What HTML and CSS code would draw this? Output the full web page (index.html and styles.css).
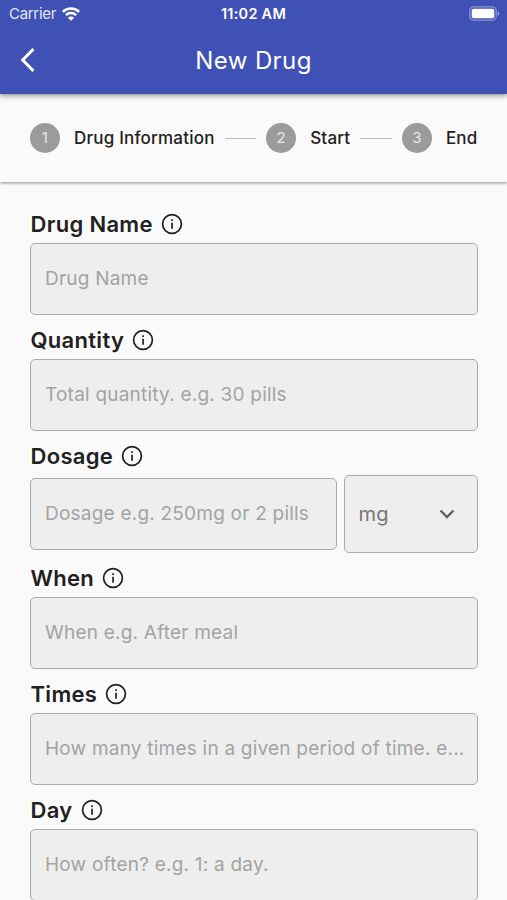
FILE: index.html
```html
<!DOCTYPE html>
<html lang="en">
<head>
<meta charset="utf-8">
<meta name="viewport" content="width=device-width, initial-scale=1">
<title>New Drug</title>
<link rel="stylesheet" href="styles.css">
</head>

<body>
<svg class="sprite" width="0" height="0">
  <symbol id="info" viewBox="0 0 24 24">
    <circle cx="12" cy="12" r="9.400" fill="none" stroke="#212121" stroke-width="1.700"/>
    <path d="M11.200 7.200h1.700v1.800h-1.700zM11.200 10.800h1.700v6h-1.700z" fill="#212121"/>
  </symbol>
</svg>

<header class="app-header">
  <div class="status-bar">
    <div class="carrier">
      <span>Carrier</span>
      <svg class="wifi" width="18" height="14" viewBox="0 0 18 14" fill="none" stroke="#fff" stroke-width="2.500">
        <path d="M.9 4.900C5.300.4 12.700.4 17.100 4.900"/>
        <path d="M3.900 8.200C6.700 5.400 11.300 5.400 14.100 8.200"/>
        <path d="M9 13.800L5.900 10.700C7.600 9.100 10.400 9.100 12.100 10.700z" fill="#fff" stroke="none"/>
      </svg>
    </div>
    <div class="clock">11:02 AM</div>
    <svg class="battery" width="31" height="15" viewBox="0 0 31 15">
      <rect x=".8" y=".8" width="26.400" height="13.400" rx="4" fill="none" stroke="#fff" stroke-opacity=".4" stroke-width="1.300"/>
      <rect x="2.700" y="2.700" width="22.600" height="9.600" rx="2" fill="#fff"/>
      <path d="M28.700 5.200c2 .9 2 3.700 0 4.600z" fill="#fff" fill-opacity=".5"/>
    </svg>
  </div>
  <div class="nav-bar">
    <svg class="back" width="16" height="26" viewBox="0 0 16 26" fill="none" stroke="#fff" stroke-width="3">
      <path d="M13.500 2L2.700 13l10.800 11"/>
    </svg>
    <h1>New Drug</h1>
  </div>
</header>

<div class="stepper">
  <div class="step"><span class="number">1</span>Drug Information</div>
  <div class="line"></div>
  <div class="step"><span class="number">2</span>Start</div>
  <div class="line"></div>
  <div class="step"><span class="number">3</span>End</div>
</div>

<form class="drug-form">
  <div class="field">
    <label for="name">Drug Name <svg class="info"><use href="#info"/></svg></label>
    <input id="name" type="text" placeholder="Drug Name">
  </div>

  <div class="field">
    <label for="quantity">Quantity <svg class="info"><use href="#info"/></svg></label>
    <input id="quantity" type="text" placeholder="Total quantity. e.g. 30 pills">
  </div>

  <div class="field">
    <label for="dosage">Dosage <svg class="info"><use href="#info"/></svg></label>
    <div class="dosage">
      <input id="dosage" type="text" placeholder="Dosage e.g. 250mg or 2 pills">
      <button class="unit" type="button">
        mg
        <svg width="16" height="10" viewBox="0 0 16 10" fill="none" stroke="#616161" stroke-width="2.400">
          <path d="M1.500 1.500L8 8l6.500-6.500"/>
        </svg>
      </button>
    </div>
  </div>

  <div class="field">
    <label for="when">When <svg class="info"><use href="#info"/></svg></label>
    <input id="when" type="text" placeholder="When e.g. After meal">
  </div>

  <div class="field">
    <label for="times">Times <svg class="info"><use href="#info"/></svg></label>
    <input id="times" type="text" placeholder="How many times in a given period of time. e...">
  </div>

  <div class="field">
    <label for="day">Day <svg class="info"><use href="#info"/></svg></label>
    <input id="day" type="text" placeholder="How often? e.g. 1: a day.">
  </div>
</form>
</body>
</html>
```

FILE: styles.css
```css
* {
  box-sizing: border-box;
}

body {
  margin: 0;
  height: 900px;
  overflow: hidden;
  background: #fafafa;
  color: #212121;
  font-family: Inter, "Liberation Sans", sans-serif;
}

.sprite {
  display: block;
}

/* header */
.app-header {
  position: relative;
  height: 94px;
  background: #3f51b5;
  color: #fff;
  box-shadow: 0 2px 5px rgba(0, 0, 0, .4);
}

.status-bar {
  display: grid;
  grid-template-columns: 1fr auto 1fr;
  align-items: center;
  height: 27px;
  padding: 0 7px 0 9px;
  font-size: 15px;
}

.carrier {
  display: flex;
  align-items: center;
  gap: 6px;
  color: #e3e6f5;
  letter-spacing: -.3px;
}

.clock {
  margin-right: 2px;
  font-weight: 600;
  font-size: 14.5px;
  letter-spacing: .25px;
}

.battery {
  justify-self: end;
}

.nav-bar {
  display: grid;
  grid-template-columns: 60px 1fr 60px;
  align-items: center;
  height: 66px;
}

.back {
  margin-left: 20px;
}

h1 {
  margin: 0;
  font-size: 24px;
  font-weight: 400;
  letter-spacing: .4px;
  text-align: center;
}

/* stepper */
.stepper {
  display: flex;
  align-items: center;
  height: 88px;
  padding: 0 29.5px 0 30px;
  box-shadow: 0 1px 3px rgba(0, 0, 0, .45);
}

.step {
  display: flex;
  align-items: center;
  gap: 14px;
  font-size: 17px;
  font-weight: 500;
  letter-spacing: .2px;
  white-space: nowrap;
}

.number {
  width: 30px;
  height: 30px;
  border-radius: 50%;
  background: #9b9b9b;
  color: #e8e8e8;
  font-size: 15px;
  font-weight: 400;
  line-height: 30px;
  text-align: center;
}

.line {
  flex: 1;
  height: 1px;
  margin: 0 10px;
  background: #bdbdbd;
}

/* form */
.drug-form {
  padding: 17px 29.5px 0 30px;
}

label {
  display: flex;
  align-items: center;
  gap: 7px;
  height: 44px;
  padding: 6px 0 0 .5px;
  font-size: 22px;
  font-weight: 600;
  letter-spacing: .3px;
}

.info {
  width: 24px;
  height: 24px;
}

input,
.unit {
  display: block;
  width: 100%;
  height: 72px;
  padding: 0 8px 2px 14px;
  border: 1px solid #aaa;
  border-radius: 5px;
  background: #eee;
  font-family: inherit;
  font-size: 19px;
  letter-spacing: .22px;
}

input::placeholder {
  color: #a3a3a3;
}

input {
  text-overflow: ellipsis;
}

.dosage {
  display: grid;
  grid-template-columns: 1fr 134px;
  align-items: center;
  gap: 7px;
}

.unit {
  display: flex;
  align-items: center;
  justify-content: space-between;
  height: 78px;
  padding: 0 22px 0 14px;
  color: #757575;
  font-size: 20px;
}
```
